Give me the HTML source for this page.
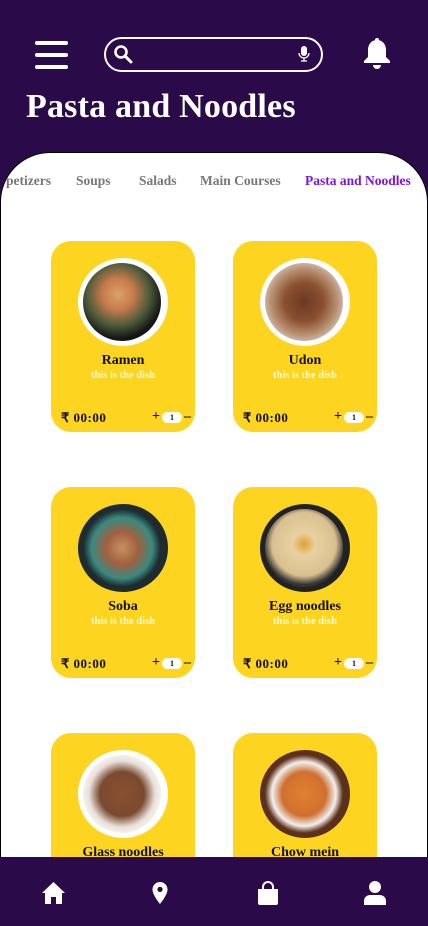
<!DOCTYPE html>
<html><head><meta charset="utf-8"><style>
*{margin:0;padding:0;box-sizing:border-box}
body{width:428px;height:926px;overflow:hidden;background:#2b0a4a;font-family:"Liberation Serif",serif;position:relative}
.panel{position:absolute;left:0;top:152px;width:428px;height:720px;background:#fff;border:1px solid #000;border-radius:50px 50px 0 0}
.tabs{position:absolute;top:173px;left:0;width:428px;white-space:nowrap;font-weight:bold;font-size:13.5px;color:#777}
.tabs span{position:absolute}
.card{position:absolute;width:144px;height:191px;background:#fdd520;border-radius:20px}
.img{position:absolute;left:27px;top:17px;width:90px;height:88px;border-radius:50%;background:#fff}
.img div{position:absolute;left:5px;top:5px;width:78px;height:78px;border-radius:50%}
.name{position:absolute;top:112px;width:100%;text-align:center;font-weight:bold;font-size:14px;color:#111}
.sub{position:absolute;top:129px;width:100%;text-align:center;font-weight:bold;font-size:10.5px;color:#fff8e0}
.price{position:absolute;left:10px;top:169px;font-weight:bold;font-size:13px;color:#111;letter-spacing:0.5px}
.qty{position:absolute;right:4px;top:168px;font-weight:bold;font-size:14px;color:#111;display:flex;align-items:center;gap:2px}
.qty b{display:inline-block;background:#fff;border-radius:7px;width:20px;height:11px;font-size:8px;text-align:center;line-height:11px}
.nav{position:absolute;left:0;top:857px;width:428px;height:69px;background:#2b0a4a}
</style></head><body>
<svg style="position:absolute;left:35px;top:41px" width="33" height="28"><rect x="0" y="0" width="33" height="4" rx="2" fill="#fff"/><rect x="0" y="12" width="33" height="4" rx="2" fill="#fff"/><rect x="0" y="24" width="33" height="4" rx="2" fill="#fff"/></svg>
<div style="position:absolute;left:104px;top:37px;width:219px;height:35px;border:2px solid #fff;border-radius:18px"></div>
<svg style="position:absolute;left:113px;top:44px" width="20" height="20"><circle cx="8" cy="8" r="5.5" stroke="#fff" stroke-width="2.6" fill="none"/><line x1="12" y1="12" x2="18" y2="18" stroke="#fff" stroke-width="3" stroke-linecap="round"/></svg>
<svg style="position:absolute;left:298px;top:46px" width="12" height="16"><rect x="3" y="0" width="6" height="10" rx="3" fill="#fff"/><path d="M1 7a5 5 0 0 0 10 0M6 12v3M3 15h6" stroke="#fff" stroke-width="1.3" fill="none"/></svg>
<svg style="position:absolute;left:362px;top:38px" width="30" height="32"><path d="M15 2c-6 0-9 5-9 10v7l-4 4v2h26v-2l-4-4v-7c0-5-3-10-9-10z" fill="#fff"/><rect x="13" y="0" width="4" height="4" rx="2" fill="#fff"/><path d="M11 27a4 4 0 0 0 8 0z" fill="#fff"/></svg>
<div style="position:absolute;left:26px;top:88px;color:#fff;font-weight:bold;font-size:34px;letter-spacing:0.2px">Pasta and Noodles</div>
<div class="panel"></div>
<div class="tabs"><span style="left:6px">petizers</span><span style="left:76px">Soups</span><span style="left:139px">Salads</span><span style="left:200px">Main Courses</span><span style="left:305px;color:#7a14e8">Pasta and Noodles</span></div>

<div class="card" style="left:51px;top:241px"><div class="img"><div style="background:radial-gradient(circle at 45% 40%,#d9a36a 0,#c77a4a 25%,#4a5a3a 50%,#151515 70%)"></div></div><div class="name">Ramen</div><div class="sub">this is the dish</div><div class="price">₹ 00:00</div><div class="qty">+<b>1</b>–</div></div>
<div class="card" style="left:233px;top:241px"><div class="img"><div style="background:radial-gradient(circle,#6b3a22 0,#8a5030 35%,#b89070 60%,#c8b0a0 70%)"></div></div><div class="name">Udon</div><div class="sub">this is the dish</div><div class="price">₹ 00:00</div><div class="qty">+<b>1</b>–</div></div>
<div class="card" style="left:51px;top:487px"><div class="img" style="background:#1e2b30"><div style="background:radial-gradient(circle,#c89060 0,#a06040 30%,#3a8a80 55%,#1e2b30 70%)"></div></div><div class="name">Soba</div><div class="sub">this is the dish</div><div class="price">₹ 00:00</div><div class="qty">+<b>1</b>–</div></div>
<div class="card" style="left:233px;top:487px"><div class="img" style="background:#222"><div style="background:radial-gradient(circle at 50% 45%,#e0a030 0,#e8d0a0 20%,#d8c090 55%,#333 70%)"></div></div><div class="name">Egg noodles</div><div class="sub">this is the dish</div><div class="price">₹ 00:00</div><div class="qty">+<b>1</b>–</div></div>
<div class="card" style="left:51px;top:733px"><div class="img"><div style="background:radial-gradient(circle,#8a5030 0,#7a4a30 40%,#e8e0d8 60%,#f4f0ec 70%)"></div></div><div class="name">Glass noodles</div></div>
<div class="card" style="left:233px;top:733px"><div class="img" style="background:#5a3020"><div style="background:radial-gradient(circle,#e08030 0,#d07030 40%,#f0f0f0 58%,#6a3a20 70%)"></div></div><div class="name">Chow mein</div></div>

<div class="nav"></div>
<svg style="position:absolute;left:41px;top:881px" width="25" height="24"><path d="M12.5 1L1 12h3v11h6v-7h5v7h6V12h3z" fill="#fff"/></svg>
<svg style="position:absolute;left:152px;top:882px" width="16" height="23"><path d="M8 0a7.5 7.5 0 0 0-7.5 7.5C.5 13 8 22 8 22s7.5-9 7.5-14.5A7.5 7.5 0 0 0 8 0zm0 10a2.6 2.6 0 1 1 0-5.2A2.6 2.6 0 0 1 8 10z" fill="#fff"/></svg>
<svg style="position:absolute;left:257px;top:881px" width="22" height="25"><path d="M1 8h20v14a2 2 0 0 1-2 2H3a2 2 0 0 1-2-2z" fill="#fff"/><path d="M6 10V6a5 5 0 0 1 10 0v4" stroke="#fff" stroke-width="2" fill="none"/></svg>
<svg style="position:absolute;left:364px;top:881px" width="22" height="25"><circle cx="11" cy="6" r="6" fill="#fff"/><path d="M0 24v-4a6 6 0 0 1 6-6h10a6 6 0 0 1 6 6v4z" fill="#fff"/></svg>
</body></html>
